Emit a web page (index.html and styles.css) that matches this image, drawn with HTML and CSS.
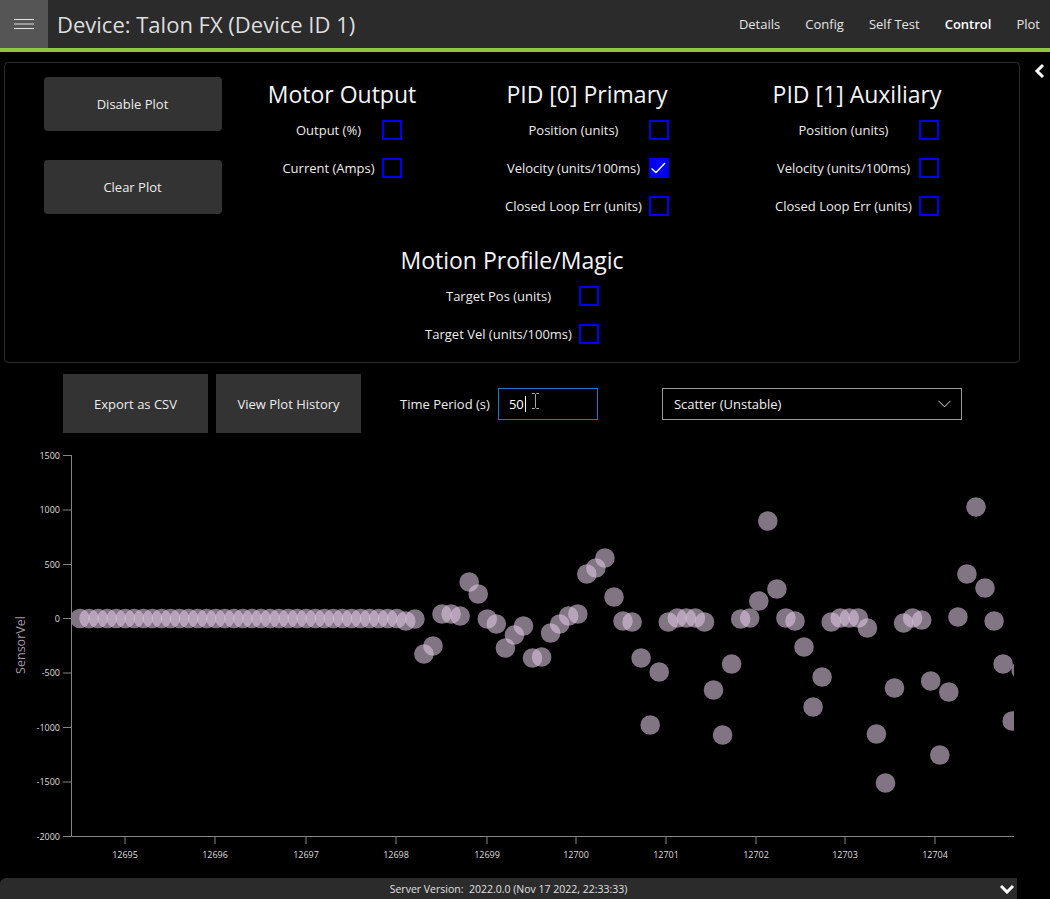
FILE: index.html
```html
<!DOCTYPE html>
<html>
<head>
<meta charset="utf-8">
<title>Device: Talon FX (Device ID 1)</title>
<link rel="stylesheet" href="styles.css">
</head>
<body>
<header class="topbar">
  <div class="menu-btn">
    <svg width="20" height="12" viewBox="0 0 20 12"><path d="M0 0.5H20M0 5H20M0 9.5H20" stroke="#e2e2e2" stroke-width="1" fill="none"/></svg>
  </div>
  <h1 class="title">Device: Talon FX (Device ID 1)</h1>
  <nav class="nav">
    <span class="nav-item">Details</span>
    <span class="nav-item">Config</span>
    <span class="nav-item">Self Test</span>
    <span class="nav-item active">Control</span>
    <span class="nav-item">Plot</span>
  </nav>
</header>
<div class="accent"></div>

<div class="workspace">
  <main class="content">
    <section class="panel">
      <div class="top-row">
        <div class="btn-col">
          <button class="pbtn">Disable Plot</button>
          <button class="pbtn">Clear Plot</button>
        </div>
        <div class="group">
          <h2>Motor Output</h2>
          <div class="rows">
            <span class="lbl">Output (%)</span><span class="cb"></span>
            <span class="lbl">Current (Amps)</span><span class="cb"></span>
          </div>
        </div>
        <div class="group">
          <h2>PID [0] Primary</h2>
          <div class="rows">
            <span class="lbl">Position (units)</span><span class="cb"></span>
            <span class="lbl">Velocity (units/100ms)</span><span class="cb checked"><svg width="16" height="16" viewBox="0 0 16 16"><path d="M0.5 8.5L5 12.5L14 3" stroke="#fff" stroke-width="1.4" fill="none"/></svg></span>
            <span class="lbl">Closed Loop Err (units)</span><span class="cb"></span>
          </div>
        </div>
        <div class="group">
          <h2>PID [1] Auxiliary</h2>
          <div class="rows">
            <span class="lbl">Position (units)</span><span class="cb"></span>
            <span class="lbl">Velocity (units/100ms)</span><span class="cb"></span>
            <span class="lbl">Closed Loop Err (units)</span><span class="cb"></span>
          </div>
        </div>
      </div>
      <div class="group motion">
        <h2>Motion Profile/Magic</h2>
        <div class="rows">
          <span class="lbl">Target Pos (units)</span><span class="cb"></span>
          <span class="lbl">Target Vel (units/100ms)</span><span class="cb"></span>
        </div>
      </div>
    </section>

    <div class="toolbar">
      <button class="tbtn">Export as CSV</button>
      <button class="tbtn second">View Plot History</button>
      <span class="tp-label">Time Period (s)</span>
      <div class="tp-input"><span class="tp-text">50</span><span class="caret"></span>
        <svg class="ibeam" width="9" height="16" viewBox="0 0 9 16"><path d="M1 0.5H3.5L4.5 1.5L5.5 0.5H8M4.5 1.5V14.5M1 15.5H3.5L4.5 14.5L5.5 15.5H8" stroke="#fff" stroke-width="1" fill="none"/><path d="M1 0.5H3.5L4.5 1.5L5.5 0.5H8M4.5 1.5V14.5M1 15.5H3.5L4.5 14.5L5.5 15.5H8" stroke="#222" stroke-width="0.4" fill="none"/></svg>
      </div>
      <div class="select">
        <span>Scatter (Unstable)</span>
        <svg width="13" height="8" viewBox="0 0 13 8"><path d="M0.5 0.8L6.5 6.8L12.5 0.8" stroke="#d8d8d8" stroke-width="1" fill="none"/></svg>
      </div>
    </div>

    <svg class="chart" width="1022" height="445" viewBox="0 433 1022 445">
      <defs><clipPath id="plotclip"><rect x="72" y="433" width="942" height="403"/></clipPath></defs>
      <g class="axis" stroke="#858585" stroke-width="1" fill="none">
        <path d="M71.5 455V836.5H1014"/>
        <path d="M63 455.5H71.5M63 510H71.5M63 564.5H71.5M63 618.5H71.5M63 673H71.5M63 727.5H71.5M63 782H71.5M63 836.5H71.5"/>
        <path d="M125 836.5V844M215 836.5V844M306 836.5V844M396 836.5V844M487 836.5V844M576 836.5V844M666 836.5V844M756 836.5V844M845 836.5V844M935 836.5V844"/>
      </g>
      <g class="ylabels" text-anchor="end">
        <text x="60" y="458.5">1500</text>
        <text x="60" y="513">1000</text>
        <text x="60" y="567.5">500</text>
        <text x="60" y="621.5">0</text>
        <text x="60" y="676">-500</text>
        <text x="60" y="730.5">-1000</text>
        <text x="60" y="785">-1500</text>
        <text x="60" y="839.5">-2000</text>
      </g>
      <g class="xlabels" text-anchor="middle">
        <text x="125" y="858">12695</text>
        <text x="215" y="858">12696</text>
        <text x="306" y="858">12697</text>
        <text x="396" y="858">12698</text>
        <text x="487" y="858">12699</text>
        <text x="576" y="858">12700</text>
        <text x="666" y="858">12701</text>
        <text x="756" y="858">12702</text>
        <text x="845" y="858">12703</text>
        <text x="935" y="858">12704</text>
      </g>
      <text class="ytitle" x="0" y="0" transform="translate(25 645) rotate(-90)" text-anchor="middle">SensorVel</text>
      <g clip-path="url(#plotclip)" fill="rgb(222,200,226)" fill-opacity="0.58">
        <circle cx="80" cy="618.5" r="9.8"/>
        <circle cx="89.1" cy="618.5" r="9.8"/>
        <circle cx="98.1" cy="618.5" r="9.8"/>
        <circle cx="107.2" cy="618.5" r="9.8"/>
        <circle cx="116.2" cy="618.5" r="9.8"/>
        <circle cx="125.3" cy="618.5" r="9.8"/>
        <circle cx="134.3" cy="618.5" r="9.8"/>
        <circle cx="143.4" cy="618.5" r="9.8"/>
        <circle cx="152.4" cy="618.5" r="9.8"/>
        <circle cx="161.5" cy="618.5" r="9.8"/>
        <circle cx="170.5" cy="618.5" r="9.8"/>
        <circle cx="179.6" cy="618.5" r="9.8"/>
        <circle cx="188.6" cy="618.5" r="9.8"/>
        <circle cx="197.7" cy="618.5" r="9.8"/>
        <circle cx="206.7" cy="618.5" r="9.8"/>
        <circle cx="215.8" cy="618.5" r="9.8"/>
        <circle cx="224.8" cy="618.5" r="9.8"/>
        <circle cx="233.9" cy="618.5" r="9.8"/>
        <circle cx="242.9" cy="618.5" r="9.8"/>
        <circle cx="252" cy="618.5" r="9.8"/>
        <circle cx="261" cy="618.5" r="9.8"/>
        <circle cx="270.1" cy="618.5" r="9.8"/>
        <circle cx="279.1" cy="618.5" r="9.8"/>
        <circle cx="288.2" cy="618.5" r="9.8"/>
        <circle cx="297.2" cy="618.5" r="9.8"/>
        <circle cx="306.3" cy="618.5" r="9.8"/>
        <circle cx="315.3" cy="618.5" r="9.8"/>
        <circle cx="324.4" cy="618.5" r="9.8"/>
        <circle cx="333.4" cy="618.5" r="9.8"/>
        <circle cx="342.5" cy="618.5" r="9.8"/>
        <circle cx="351.5" cy="618.5" r="9.8"/>
        <circle cx="360.6" cy="618.5" r="9.8"/>
        <circle cx="369.6" cy="618.5" r="9.8"/>
        <circle cx="378.7" cy="618.5" r="9.8"/>
        <circle cx="387.7" cy="618.5" r="9.8"/>
        <circle cx="396.8" cy="618.5" r="9.8"/>
        <circle cx="405.8" cy="621" r="9.8"/>
        <circle cx="414.9" cy="619" r="9.8"/>
        <circle cx="423.9" cy="654" r="9.8"/>
        <circle cx="433" cy="646" r="9.8"/>
        <circle cx="442" cy="614" r="9.8"/>
        <circle cx="451.1" cy="614" r="9.8"/>
        <circle cx="460.1" cy="616" r="9.8"/>
        <circle cx="469.2" cy="582" r="9.8"/>
        <circle cx="478.2" cy="594" r="9.8"/>
        <circle cx="487.3" cy="619" r="9.8"/>
        <circle cx="496.3" cy="624" r="9.8"/>
        <circle cx="505.4" cy="648" r="9.8"/>
        <circle cx="514.4" cy="635" r="9.8"/>
        <circle cx="523.5" cy="626" r="9.8"/>
        <circle cx="532.5" cy="658" r="9.8"/>
        <circle cx="541.6" cy="657" r="9.8"/>
        <circle cx="550.6" cy="633" r="9.8"/>
        <circle cx="559.7" cy="624" r="9.8"/>
        <circle cx="568.7" cy="616" r="9.8"/>
        <circle cx="577.8" cy="614" r="9.8"/>
        <circle cx="586.8" cy="574" r="9.8"/>
        <circle cx="595.9" cy="568" r="9.8"/>
        <circle cx="604.9" cy="558" r="9.8"/>
        <circle cx="614" cy="597" r="9.8"/>
        <circle cx="623" cy="621" r="9.8"/>
        <circle cx="632.1" cy="622" r="9.8"/>
        <circle cx="641.1" cy="658" r="9.8"/>
        <circle cx="650.2" cy="725" r="9.8"/>
        <circle cx="659.2" cy="672" r="9.8"/>
        <circle cx="668.3" cy="622" r="9.8"/>
        <circle cx="677.3" cy="618" r="9.8"/>
        <circle cx="686.4" cy="618" r="9.8"/>
        <circle cx="695.4" cy="618" r="9.8"/>
        <circle cx="704.5" cy="622" r="9.8"/>
        <circle cx="713.5" cy="690" r="9.8"/>
        <circle cx="722.6" cy="735" r="9.8"/>
        <circle cx="731.6" cy="664" r="9.8"/>
        <circle cx="740.7" cy="619" r="9.8"/>
        <circle cx="749.7" cy="618" r="9.8"/>
        <circle cx="758.8" cy="601" r="9.8"/>
        <circle cx="767.8" cy="521" r="9.8"/>
        <circle cx="776.9" cy="589" r="9.8"/>
        <circle cx="785.9" cy="618" r="9.8"/>
        <circle cx="795" cy="621" r="9.8"/>
        <circle cx="804" cy="647" r="9.8"/>
        <circle cx="813.1" cy="707" r="9.8"/>
        <circle cx="822.1" cy="677" r="9.8"/>
        <circle cx="831.2" cy="622" r="9.8"/>
        <circle cx="840.2" cy="618" r="9.8"/>
        <circle cx="849.3" cy="618" r="9.8"/>
        <circle cx="858.3" cy="618" r="9.8"/>
        <circle cx="867.4" cy="628" r="9.8"/>
        <circle cx="876.4" cy="734" r="9.8"/>
        <circle cx="885.5" cy="783" r="9.8"/>
        <circle cx="894.5" cy="688" r="9.8"/>
        <circle cx="903.6" cy="623" r="9.8"/>
        <circle cx="912.6" cy="618" r="9.8"/>
        <circle cx="921.7" cy="620" r="9.8"/>
        <circle cx="930.7" cy="681" r="9.8"/>
        <circle cx="939.8" cy="755" r="9.8"/>
        <circle cx="948.8" cy="692" r="9.8"/>
        <circle cx="957.9" cy="617" r="9.8"/>
        <circle cx="966.9" cy="574" r="9.8"/>
        <circle cx="976" cy="507" r="9.8"/>
        <circle cx="985" cy="588" r="9.8"/>
        <circle cx="994.1" cy="621" r="9.8"/>
        <circle cx="1003.1" cy="664" r="9.8"/>
        <circle cx="1012.2" cy="721" r="9.8"/>
        <circle cx="1021.2" cy="670" r="9.8"/>
      </g>
    </svg>
  </main>
  <aside class="sidebar">
    <svg width="12" height="16" viewBox="0 0 12 16"><path d="M9 2L3 8L9 14" stroke="#fff" stroke-width="3" fill="none"/></svg>
  </aside>
</div>

<footer class="footer">
  <div class="footer-bar">
    <span></span>
    <span class="version">Server Version:&nbsp; 2022.0.0 (Nov 17 2022, 22:33:33)</span>
    <svg class="footer-chev" width="16" height="10" viewBox="0 0 16 10"><path d="M2 2L8 8L14 2" stroke="#fff" stroke-width="3" fill="none"/></svg>
  </div>
</footer>
</body>
</html>
```

FILE: styles.css
```css
html, body {
  margin: 0;
  padding: 0;
  background: #000;
}
body {
  width: 1050px;
  height: 899px;
  overflow: hidden;
  font-family: "Open Sans", "Noto Sans", sans-serif;
  color: #e6e6e6;
}
button {
  font-family: inherit;
  border: none;
  cursor: default;
}

/* Header */
.topbar {
  height: 48px;
  background: #2b2b2b;
  display: flex;
  align-items: center;
}
.menu-btn {
  width: 48px;
  height: 48px;
  background: #555555;
  display: flex;
  align-items: center;
  justify-content: center;
  padding-top: 1px;
  box-sizing: border-box;
}
.title {
  margin: 0 0 0 9px;
  font-size: 22px;
  font-weight: 400;
  color: #dedede;
  line-height: 48px;
}
.nav {
  margin-left: auto;
  display: flex;
  gap: 25px;
  padding-right: 10px;
  font-size: 13px;
  color: #e4e4e4;
}
.nav-item.active {
  font-weight: 600;
  color: #fff;
}
.accent {
  height: 4px;
  background: #8dc63f;
}

/* Workspace */
.workspace {
  display: flex;
}
.content {
  width: 1022px;
  flex: none;
}
.sidebar {
  flex: 1;
  padding: 10px 0 0 12px;
}

/* Panel */
.panel {
  margin: 10px 0 0 4px;
  width: 1016px;
  box-sizing: border-box;
  border: 1px solid #2c2c2c;
  border-radius: 4px;
  padding: 14px 0 9px 0;
  display: flex;
  flex-direction: column;
}
.top-row {
  display: grid;
  grid-template-columns: 255px 164px 326px 214px;
  align-items: start;
}
.btn-col {
  display: flex;
  flex-direction: column;
  align-items: center;
  gap: 29px;
}
.pbtn {
  width: 178px;
  height: 54px;
  background: #333333;
  color: #ececec;
  border-radius: 4px;
  font-size: 13px;
}
.group {
  display: flex;
  flex-direction: column;
  align-items: center;
}
.group h2 {
  margin: 0;
  font-size: 23px;
  font-weight: 400;
  line-height: 34px;
  color: #f4f4f4;
  white-space: nowrap;
}
.rows {
  display: grid;
  grid-template-columns: auto 20px;
  column-gap: 7px;
  grid-auto-rows: 38px;
  align-items: center;
  justify-items: center;
}
.lbl {
  font-size: 13px;
  color: #ececec;
}
.cb {
  width: 20px;
  height: 20px;
  box-sizing: border-box;
  border: 2px solid #0000f0;
  display: flex;
  align-items: center;
  justify-content: center;
}
.cb.checked {
  background: #0000f0;
}
.motion {
  margin-top: 18px;
  align-self: center;
}

/* Toolbar */
.toolbar {
  margin-top: 11px;
  padding-left: 63px;
  height: 59px;
  display: flex;
  align-items: center;
}
.tbtn {
  width: 145px;
  height: 59px;
  background: #333333;
  color: #ececec;
  font-size: 13px;
}
.tbtn.second {
  margin-left: 8px;
}
.tp-label {
  margin-left: 39px;
  font-size: 13px;
  color: #ececec;
}
.tp-input {
  position: relative;
  margin-left: 8px;
  width: 100px;
  height: 32px;
  box-sizing: border-box;
  border: 1px solid #1a78d0;
  display: flex;
  align-items: center;
  padding-left: 10px;
  font-size: 13px;
  color: #fff;
}
.caret {
  width: 1px;
  height: 16px;
  background: #fff;
  margin-left: 1px;
}
.ibeam {
  position: absolute;
  left: 32px;
  top: 4px;
}
.select {
  margin-left: 64px;
  width: 300px;
  height: 32px;
  box-sizing: border-box;
  border: 1px solid #9a9a9a;
  display: flex;
  align-items: center;
  justify-content: space-between;
  padding: 0 10px 0 11px;
  font-size: 13px;
  color: #f0f0f0;
}

/* Chart */
.chart {
  display: block;
}
.ylabels text, .xlabels text {
  font-family: "Open Sans", sans-serif;
  font-size: 9px;
  fill: #dedede;
}
.ytitle {
  font-family: "Open Sans", sans-serif;
  font-size: 12.5px;
  fill: #a897a9;
}

/* Footer */
.footer {
  height: 21px;
  display: flex;
}
.footer-bar {
  width: 1017px;
  height: 21px;
  background: #2b2b2b;
  border-top-left-radius: 6px;
  display: grid;
  grid-template-columns: 1fr auto 1fr;
  align-items: center;
}
.version {
  font-size: 10.5px;
  color: #e0e0e0;
}
.footer-chev {
  justify-self: end;
  margin-right: 2px;
}
```
